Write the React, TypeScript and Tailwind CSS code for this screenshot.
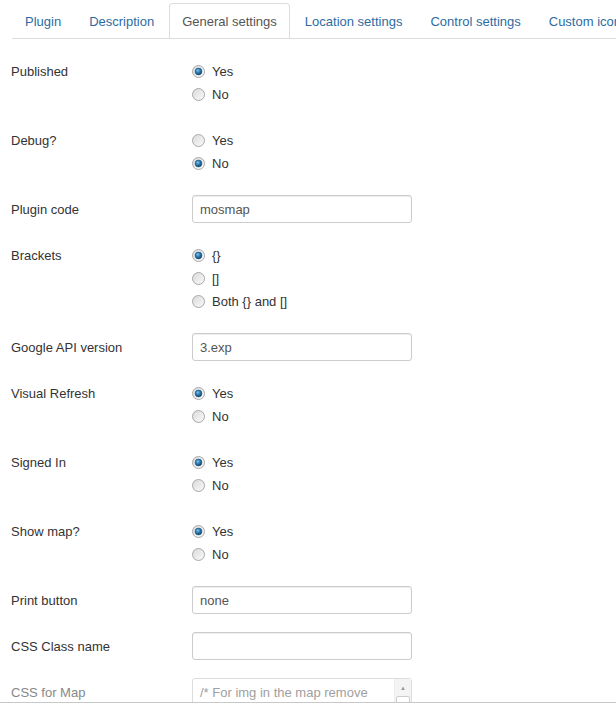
import React from 'react';

type Field =
    | { kind: 'radio'; label: string; options: string[]; checked: number }
    | { kind: 'text'; label: string; value: string };

const fields: Field[] = [
    { kind: 'radio', label: 'Published', options: ['Yes', 'No'], checked: 0 },
    { kind: 'radio', label: 'Debug?', options: ['Yes', 'No'], checked: 1 },
    { kind: 'text', label: 'Plugin code', value: 'mosmap' },
    { kind: 'radio', label: 'Brackets', options: ['{}', '[]', 'Both {} and []'], checked: 0 },
    { kind: 'text', label: 'Google API version', value: '3.exp' },
    { kind: 'radio', label: 'Visual Refresh', options: ['Yes', 'No'], checked: 0 },
    { kind: 'radio', label: 'Signed In', options: ['Yes', 'No'], checked: 0 },
    { kind: 'radio', label: 'Show map?', options: ['Yes', 'No'], checked: 0 },
    { kind: 'text', label: 'Print button', value: 'none' },
    { kind: 'text', label: 'CSS Class name', value: '' },
];

const tabs = ['Plugin', 'Description', 'General settings', 'Location settings', 'Control settings', 'Custom icons'];

function RadioDot({ checked }: { checked: boolean }) {
    return (
        <svg width="13" height="13" viewBox="0 0 13 13" className="shrink-0">
            <defs>
                <linearGradient id="rg-off" x1="0" y1="0" x2="1" y2="1">
                    <stop offset="0" stopColor="#d9d9d9" />
                    <stop offset="1" stopColor="#fbfbfb" />
                </linearGradient>
                <radialGradient id="rg-on" cx="0.4" cy="0.35" r="0.6">
                    <stop offset="0" stopColor="#7fc3ee" />
                    <stop offset="0.55" stopColor="#2a7db4" />
                    <stop offset="1" stopColor="#174c73" />
                </radialGradient>
            </defs>
            <circle cx="6.5" cy="6.5" r="6" fill="url(#rg-off)" stroke="#a9a9a9" strokeWidth="1" />
            {checked && <circle cx="6.5" cy="6.5" r="3.4" fill="url(#rg-on)" stroke="#1c4f75" strokeWidth="0.6" />}
        </svg>
    );
}

function RadioRow({ field }: { field: Extract<Field, { kind: 'radio' }> }) {
    return (
        <div className="flex items-start pt-[3px] pb-[2px] mb-[18px]">
            <div className="w-[181px] shrink-0 h-[23px] leading-[23px] text-[#333]">{field.label}</div>
            <div className="flex flex-col">
                {field.options.map((opt, i) => (
                    <div key={opt} className="flex items-center h-[23px] text-[#333]">
                        <RadioDot checked={i === field.checked} />
                        <span className="ml-[7px]">{opt}</span>
                    </div>
                ))}
            </div>
        </div>
    );
}

function TextRow({ field }: { field: Extract<Field, { kind: 'text' }> }) {
    return (
        <div className="flex items-start mb-[18px]">
            <div className="w-[181px] shrink-0 h-[28px] leading-[30px] text-[#333]">{field.label}</div>
            <div className="w-[220px] h-[28px] border border-[#ccc] rounded-[3px] bg-white px-[7px] leading-[28px] text-[#555] shadow-[inset_0_1px_1px_rgba(0,0,0,0.075)]">
                {field.value}
            </div>
        </div>
    );
}

export default function App() {
    return (
        <div className="w-[616px] h-[705px] overflow-hidden bg-white text-[13px] font-['Liberation_Sans',Arial,sans-serif]">
            <div className="h-[702px] overflow-hidden pt-[3px]">
                <nav className="ml-[12px] flex flex-nowrap overflow-hidden border-b border-[#ddd] whitespace-nowrap">
                    {tabs.map((t) => (
                        <div
                            key={t}
                            className={
                                t === 'General settings'
                                    ? 'shrink-0 px-3 pt-[9px] pb-[7px] leading-[18px] mr-[2px] -mb-px border border-[#ddd] border-b-white rounded-t-[4px] bg-white text-[#555]'
                                    : 'shrink-0 px-3 pt-[9px] pb-[7px] leading-[18px] mr-[2px] -mb-px border border-transparent rounded-t-[4px] text-[#2d6ca2]'
                            }
                        >
                            {t}
                        </div>
                    ))}
                </nav>

                <form className="pl-[11px] pt-[18px]">
                    {fields.map((f) =>
                        f.kind === 'radio' ? <RadioRow key={f.label} field={f} /> : <TextRow key={f.label} field={f} />
                    )}

                    <div className="flex items-start">
                        <div className="w-[181px] shrink-0 h-[28px] leading-[30px] text-[#888]">CSS for Map</div>
                        <div className="relative w-[220px] h-[60px] border border-[#ddd] rounded-[3px] bg-white pl-[7px] pr-[20px] pt-[5px] leading-[18px] text-[#a0a0a0]">
                            /* For img in the map remove
                            <div className="absolute top-0 right-0 w-[17px] h-full bg-[#f4f4f4] border-l border-[#eee] flex flex-col">
                                <div className="h-[17px] flex items-center justify-center text-[6px] text-[#999]">▲</div>
                                <div className="mx-[1px] h-[30px] bg-white border border-[#ccc] rounded-[2px]"></div>
                            </div>
                        </div>
                    </div>
                </form>
            </div>
            <div className="h-[3px] border-t border-[#c8c8c8] bg-white"></div>
        </div>
    );
}
